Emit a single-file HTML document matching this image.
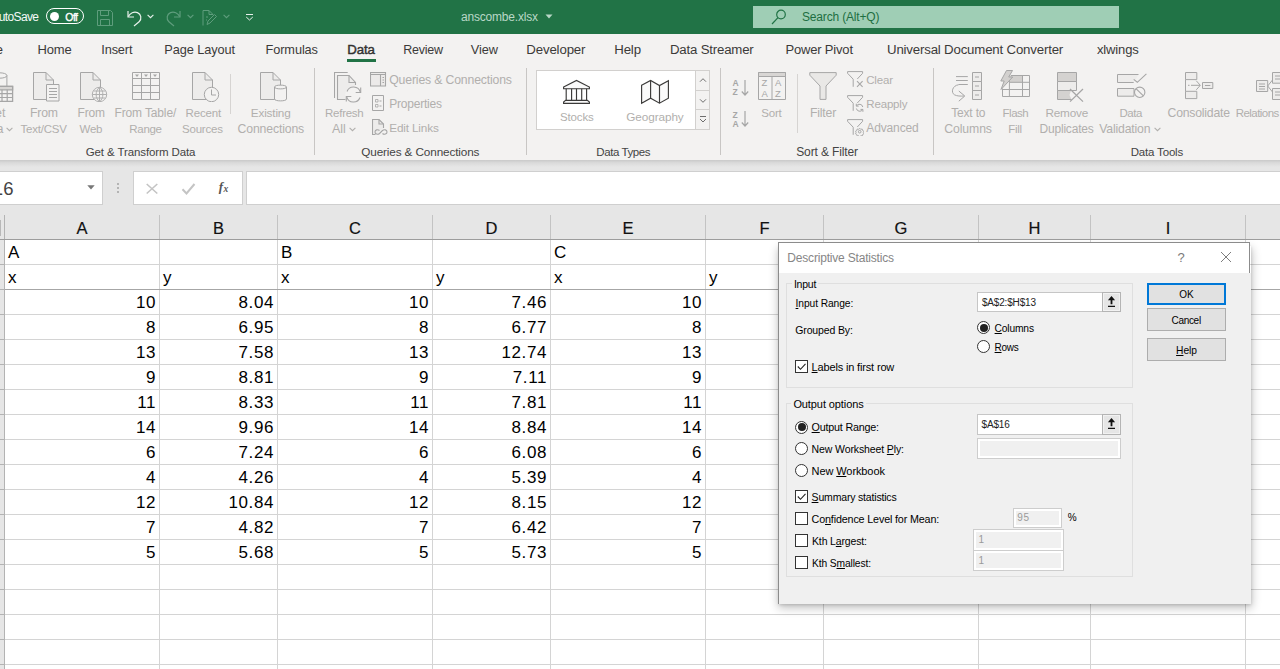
<!DOCTYPE html>
<html><head><meta charset="utf-8"><title>Excel</title>
<style>
html,body{margin:0;padding:0;}
html{overflow:hidden;width:1280px;height:669px;}
body{width:1280px;height:669px;overflow:hidden;position:relative;background:#fff;font-family:"Liberation Sans",sans-serif;}
.t{position:absolute;white-space:nowrap;margin:0;padding:0;}
.b{position:absolute;box-sizing:border-box;display:block;}
u{text-decoration:underline;text-underline-offset:1px;}
</style></head><body>
<div class="b" style="left:0px;top:0px;width:1280px;height:34px;background:#217346;"></div>
<div class="t" style="left:-1.20px;top:8.00px;font-size:12.0px;line-height:18px;color:#f4f9f6;letter-spacing:-0.655px;">utoSave</div>
<div class="b" style="left:46px;top:8px;width:38px;height:16px;border:1px solid #fff;border-radius:9px;"></div>
<div class="b" style="left:50px;top:12px;width:8.500px;height:8.500px;border-radius:5px;background:#fff;"></div>
<div class="t" style="left:65.30px;top:9.00px;font-size:10.5px;line-height:16px;color:#fff;letter-spacing:-0.569px;-webkit-text-stroke:0.35px #fff;">Off</div>
<svg class="b" style="left:96px;top:9px" width="18" height="18" viewBox="0 0 18 18" fill="none" stroke="#5f9d7d" stroke-width="1"><path d="M1.5 1.5h13l2 2v13h-15z"/><path d="M4.5 1.5v5h8v-5"/><path d="M4.5 16.5v-6h9v6"/></svg>
<svg class="b" style="left:126px;top:9px" width="17" height="18" viewBox="0 0 17 18" fill="none" stroke="#e8f1ec" stroke-width="1.2"><path d="M2 2v6h6"/><path d="M2.3 7.6C4 4 8 2.2 11.5 3.6c3.6 1.5 4.6 6 1.6 9.200L8 17"/></svg>
<svg class="b" style="left:147px;top:14px" width="7" height="5" viewBox="0 0 7 5" fill="none" stroke="#e8f1ec" stroke-width="1.1"><path d="M.6.8l2.900 2.900L6.400.8"/></svg>
<svg class="b" style="left:165px;top:9px" width="17" height="18" viewBox="0 0 17 18" fill="none" stroke="#5f9d7d" stroke-width="1.2"><path d="M15 2v6H9"/><path d="M14.700 7.600C13 4 9 2.200 5.500 3.600 1.900 5.100.9 9.600 3.900 12.800L9 17"/></svg>
<svg class="b" style="left:187px;top:14px" width="7" height="5" viewBox="0 0 7 5" fill="none" stroke="#5f9d7d" stroke-width="1.1"><path d="M.6.8l2.900 2.900L6.400.8"/></svg>
<svg class="b" style="left:202px;top:9px" width="16" height="18" viewBox="0 0 16 18" fill="none" stroke="#5f9d7d" stroke-width="1"><path d="M1 16.500V1.500h6l4 4"/><path d="M7 1.500v4h4"/><path d="M5 15.500l1-3.500 6.500-6.500 2 2L8 14z"/><path d="M4 8h2M4 11h1"/></svg>
<svg class="b" style="left:223px;top:14px" width="7" height="5" viewBox="0 0 7 5" fill="none" stroke="#5f9d7d" stroke-width="1.1"><path d="M.6.8l2.900 2.900L6.400.8"/></svg>
<svg class="b" style="left:245px;top:12px" width="9" height="9" viewBox="0 0 9 9" fill="none" stroke="#e8f1ec" stroke-width="1"><path d="M1 2.500h7"/><path d="M1.200 5l3.300 3 3.300-3"/></svg>
<div class="t" style="left:461.00px;top:8.00px;font-size:12.0px;line-height:18px;color:#b9d8c7;letter-spacing:-0.197px;">anscombe.xlsx</div>
<svg class="b" style="left:545px;top:14px" width="8" height="5" viewBox="0 0 8 5"><path d="M.5.5h7L4 4.500z" fill="#b9d8c7"/></svg>
<div class="b" style="left:753px;top:6px;width:366px;height:22px;background:#9fceb5;"></div>
<svg class="b" style="left:771px;top:9px" width="16" height="16" viewBox="0 0 16 16" fill="none" stroke="#217346" stroke-width="1.2"><circle cx="10" cy="5.500" r="4.300"/><path d="M7 8.700L1 15"/></svg>
<div class="t" style="left:802.00px;top:8.00px;font-size:12.0px;line-height:18px;color:#1e6e42;letter-spacing:-0.169px;">Search (Alt+Q)</div>
<div class="b" style="left:0px;top:34px;width:1280px;height:126px;background:#f3f2f1;"></div>
<div class="t" style="left:-18.75px;top:40.00px;font-size:13.5px;line-height:19px;color:#3b3a39;">File</div>
<div class="t" style="left:37.50px;top:40.00px;font-size:13.0px;line-height:19px;color:#3b3a39;letter-spacing:-0.145px;">Home</div>
<div class="t" style="left:101.25px;top:40.00px;font-size:12.75px;line-height:19px;color:#3b3a39;letter-spacing:-0.128px;">Insert</div>
<div class="t" style="left:164.25px;top:40.00px;font-size:12.75px;line-height:19px;color:#3b3a39;letter-spacing:-0.085px;">Page Layout</div>
<div class="t" style="left:265.50px;top:40.00px;font-size:12.75px;line-height:19px;color:#3b3a39;letter-spacing:-0.092px;">Formulas</div>
<div class="t" style="left:403.25px;top:41.00px;font-size:12.5px;line-height:18px;color:#3b3a39;letter-spacing:-0.255px;">Review</div>
<div class="t" style="left:470.75px;top:40.00px;font-size:12.75px;line-height:19px;color:#3b3a39;letter-spacing:-0.063px;">View</div>
<div class="t" style="left:526.25px;top:40.00px;font-size:13.25px;line-height:19px;color:#3b3a39;letter-spacing:-0.143px;">Developer</div>
<div class="t" style="left:614.25px;top:40.00px;font-size:13.25px;line-height:19px;color:#3b3a39;letter-spacing:-0.168px;">Help</div>
<div class="t" style="left:670.00px;top:40.00px;font-size:13.25px;line-height:19px;color:#3b3a39;letter-spacing:-0.200px;">Data Streamer</div>
<div class="t" style="left:785.50px;top:40.00px;font-size:13.0px;line-height:19px;color:#3b3a39;letter-spacing:-0.185px;">Power Pivot</div>
<div class="t" style="left:887.00px;top:40.00px;font-size:13.25px;line-height:19px;color:#3b3a39;letter-spacing:-0.182px;">Universal Document Converter</div>
<div class="t" style="left:1097.00px;top:40.00px;font-size:13.0px;line-height:19px;color:#3b3a39;letter-spacing:-0.146px;">xlwings</div>
<div class="t" style="left:347.30px;top:40.00px;font-size:13.25px;line-height:19px;color:#323130;letter-spacing:-0.099px;-webkit-text-stroke:0.45px #323130;">Data</div>
<div class="b" style="left:347px;top:59px;width:29px;height:3px;background:#217346;"></div>
<div class="b" style="left:314px;top:68px;width:1px;height:87px;background:#c8c6c4;"></div>
<div class="b" style="left:526px;top:68px;width:1px;height:87px;background:#c8c6c4;"></div>
<div class="b" style="left:720px;top:68px;width:1px;height:87px;background:#c8c6c4;"></div>
<div class="b" style="left:933px;top:68px;width:1px;height:87px;background:#c8c6c4;"></div>
<div class="b" style="left:230px;top:74px;width:1px;height:40px;background:#d6d4d2;"></div>
<div class="b" style="left:797px;top:74px;width:1px;height:59px;background:#d6d4d2;"></div>
<div class="t" style="left:85.75px;top:144.00px;font-size:11.5px;line-height:16px;color:#444;letter-spacing:-0.110px;">Get &amp; Transform Data</div>
<div class="t" style="left:361.25px;top:143.00px;font-size:11.75px;line-height:17px;color:#444;letter-spacing:-0.129px;">Queries &amp; Connections</div>
<div class="t" style="left:596.25px;top:144.00px;font-size:11.5px;line-height:16px;color:#444;letter-spacing:-0.412px;">Data Types</div>
<div class="t" style="left:796.25px;top:143.00px;font-size:12.0px;line-height:18px;color:#444;letter-spacing:-0.133px;">Sort &amp; Filter</div>
<div class="t" style="left:1130.75px;top:144.00px;font-size:11.5px;line-height:16px;color:#444;letter-spacing:-0.181px;">Data Tools</div>
<div class="t" style="left:-14.65px;top:104.00px;font-size:12.5px;line-height:18px;color:#b1afad;">Get</div>
<div class="t" style="left:-22.91px;top:120.00px;font-size:12.5px;line-height:18px;color:#b1afad;">Data</div>
<div class="t" style="left:30.00px;top:104.00px;font-size:12.25px;line-height:18px;color:#b1afad;letter-spacing:-0.193px;">From</div>
<div class="t" style="left:20.50px;top:121.00px;font-size:11.5px;line-height:16px;color:#b1afad;letter-spacing:-0.205px;">Text/CSV</div>
<div class="t" style="left:77.50px;top:104.00px;font-size:12.0px;line-height:18px;color:#b1afad;letter-spacing:-0.165px;">From</div>
<div class="t" style="left:79.50px;top:121.00px;font-size:11.5px;line-height:16px;color:#b1afad;letter-spacing:-0.219px;">Web</div>
<div class="t" style="left:114.50px;top:104.00px;font-size:12.0px;line-height:18px;color:#b1afad;letter-spacing:-0.138px;">From Table/</div>
<div class="t" style="left:129.25px;top:121.00px;font-size:11.5px;line-height:16px;color:#b1afad;letter-spacing:-0.285px;">Range</div>
<div class="t" style="left:185.50px;top:105.00px;font-size:11.5px;line-height:16px;color:#b1afad;letter-spacing:-0.136px;">Recent</div>
<div class="t" style="left:182.00px;top:121.00px;font-size:11.5px;line-height:16px;color:#b1afad;letter-spacing:-0.197px;">Sources</div>
<div class="t" style="left:250.75px;top:104.00px;font-size:11.75px;line-height:17px;color:#b1afad;letter-spacing:-0.162px;">Existing</div>
<div class="t" style="left:237.50px;top:120.00px;font-size:12.25px;line-height:18px;color:#b1afad;letter-spacing:-0.135px;">Connections</div>
<div class="t" style="left:325.00px;top:105.00px;font-size:11.5px;line-height:16px;color:#b1afad;letter-spacing:-0.252px;">Refresh</div>
<div class="t" style="left:332.00px;top:120.00px;font-size:12.5px;line-height:18px;color:#b1afad;letter-spacing:-0.069px;">All</div>
<div class="t" style="left:389.25px;top:71.00px;font-size:12.25px;line-height:18px;color:#b1afad;letter-spacing:-0.161px;">Queries &amp; Connections</div>
<div class="t" style="left:389.25px;top:95.00px;font-size:12.0px;line-height:18px;color:#b1afad;letter-spacing:-0.216px;">Properties</div>
<div class="t" style="left:389.25px;top:119.00px;font-size:11.75px;line-height:17px;color:#b1afad;letter-spacing:-0.160px;">Edit Links</div>
<div class="t" style="left:761.25px;top:105.00px;font-size:11.5px;line-height:16px;color:#b1afad;letter-spacing:-0.197px;">Sort</div>
<div class="t" style="left:810.00px;top:104.00px;font-size:12.25px;line-height:18px;color:#b1afad;letter-spacing:-0.194px;">Filter</div>
<div class="t" style="left:866.25px;top:72.00px;font-size:11.5px;line-height:16px;color:#b1afad;letter-spacing:-0.184px;">Clear</div>
<div class="t" style="left:866.25px;top:96.00px;font-size:11.5px;line-height:16px;color:#b1afad;letter-spacing:-0.157px;">Reapply</div>
<div class="t" style="left:866.25px;top:119.00px;font-size:12.0px;line-height:18px;color:#b1afad;letter-spacing:-0.125px;">Advanced</div>
<div class="t" style="left:951.25px;top:104.00px;font-size:12.0px;line-height:18px;color:#b1afad;letter-spacing:-0.184px;">Text to</div>
<div class="t" style="left:944.25px;top:120.00px;font-size:12.25px;line-height:18px;color:#b1afad;letter-spacing:-0.098px;">Columns</div>
<div class="t" style="left:1002.50px;top:105.00px;font-size:11.5px;line-height:16px;color:#b1afad;letter-spacing:-0.467px;">Flash</div>
<div class="t" style="left:1008.25px;top:121.00px;font-size:11.5px;line-height:16px;color:#b1afad;letter-spacing:-0.312px;">Fill</div>
<div class="t" style="left:1045.50px;top:104.00px;font-size:11.75px;line-height:17px;color:#b1afad;letter-spacing:-0.201px;">Remove</div>
<div class="t" style="left:1039.50px;top:120.00px;font-size:12.0px;line-height:18px;color:#b1afad;letter-spacing:-0.198px;">Duplicates</div>
<div class="t" style="left:1119.50px;top:105.00px;font-size:11.5px;line-height:16px;color:#b1afad;letter-spacing:-0.433px;">Data</div>
<div class="t" style="left:1099.25px;top:120.00px;font-size:12.25px;line-height:18px;color:#b1afad;letter-spacing:-0.183px;">Validation</div>
<div class="t" style="left:1167.50px;top:104.00px;font-size:12.25px;line-height:18px;color:#b1afad;letter-spacing:-0.219px;">Consolidate</div>
<div class="t" style="left:1235.75px;top:105.00px;font-size:11.5px;line-height:16px;color:#b1afad;letter-spacing:-0.549px;">Relations</div>
<svg class="b" style="left:6px;top:127px" width="7" height="5" viewBox="0 0 7 5" fill="none" stroke="#b1afad" stroke-width="1.1"><path d="M.6.8l2.900 2.900L6.400.8"/></svg>
<svg class="b" style="left:349px;top:127px" width="7" height="5" viewBox="0 0 7 5" fill="none" stroke="#b1afad" stroke-width="1.1"><path d="M.6.8l2.900 2.900L6.400.8"/></svg>
<svg class="b" style="left:1154px;top:127px" width="7" height="5" viewBox="0 0 7 5" fill="none" stroke="#b1afad" stroke-width="1.1"><path d="M.6.8l2.900 2.900L6.400.8"/></svg>
<svg class="b" style="left:0px;top:71px" width="16" height="32" viewBox="0 0 16 32" fill="none" stroke="#a6a6a6" stroke-width="1" ><path d="M-8 4.500c0-3.600 14.900-3.600 14.900 0v11"/><path d="M-8 4.500c0 3.600 14.900 3.600 14.900 0"/><path d="M-3 15.400h15.600v15H-3z" fill="#f3f2f1" stroke-width="1.300"/><path d="M-3 15.400h15.600v3.400H-3z" fill="#d8d6d4" stroke-width="1.300"/><path d="M-3 22.600h15.600M-3 26.500h15.600M2 18.800v11.600M7.200 18.800v11.600" stroke-width="1.200"/></svg>
<svg class="b" style="left:33px;top:72px" width="28" height="30" viewBox="0 0 28 30" fill="none" stroke="#a6a6a6" stroke-width="1" ><path d="M.5.5h12.500l7.500 7.500v19.500h-20z" fill="#edeceb"/><path d="M13 .5v7.500h7.500"/><path d="M13.500 12.500h12.500v16.500h-12.500z" fill="#f3f2f1"/><path d="M16 16.500h8M16 19.500h8M16 22.500h8M16 25.500h8"/></svg>
<svg class="b" style="left:80px;top:72px" width="28" height="30" viewBox="0 0 28 30" fill="none" stroke="#a6a6a6" stroke-width="1" ><path d="M.5.5h12.500l7.500 7.500v19.500h-20z" fill="#edeceb"/><path d="M13 .5v7.500h7.500"/><circle cx="19.500" cy="22.500" r="7.200" fill="#f3f2f1" stroke="#b0b0b0"/><path d="M12.300 22.500h14.400M19.500 15.300v14.400M19.500 15.300c-4.500 3.500-4.500 10.900 0 14.400M19.500 15.300c4.500 3.500 4.500 10.900 0 14.400M13.500 19h12M13.500 26h12" stroke="#b0b0b0"/></svg>
<svg class="b" style="left:132px;top:72px" width="28" height="28" viewBox="0 0 28 28" fill="none" stroke="#a6a6a6" stroke-width="1" ><path d="M.5.500h27v27h-27z"/><path d="M.5 6.500h27M.5 13.500h27M.5 20.500h27M9.500.5v27M18.500.5v27"/><path d="M3 2.500h4l-2 2.500zM12 2.500h4l-2 2.500zM21 2.500h4l-2 2.500z" fill="#a6a6a6" stroke="none"/></svg>
<svg class="b" style="left:192px;top:72px" width="28" height="30" viewBox="0 0 28 30" fill="none" stroke="#a6a6a6" stroke-width="1" ><path d="M.5.5h12.500l7.500 7.500v19.500h-20z" fill="#edeceb"/><path d="M13 .5v7.500h7.500"/><circle cx="19.500" cy="22.500" r="7.200" fill="#f3f2f1"/><path d="M19.500 17.500v5.500h4.500"/></svg>
<svg class="b" style="left:260px;top:72px" width="28" height="30" viewBox="0 0 28 30" fill="none" stroke="#a6a6a6" stroke-width="1" ><path d="M.5.5h12.500l7.500 7.500v19.500h-20z" fill="#edeceb"/><path d="M13 .5v7.500h7.500"/><path d="M14.500 15v12c0 2.500 12 2.500 12 0V15c0-2.500-12-2.500-12 0z" fill="#f3f2f1"/><path d="M14.500 15c0 2.500 12 2.500 12 0"/></svg>
<svg class="b" style="left:334px;top:71px" width="30" height="32" viewBox="0 0 30 32" fill="none" stroke="#a6a6a6" stroke-width="1.1" ><path d="M13.700 1.500H.5v25.500"/><path d="M11.500 28.500H3.500v-24h11.500l6.500 7v2.500" fill="#edeceb"/><path d="M15 4.500v7h6.500"/><circle cx="19.500" cy="23.500" r="8.300" fill="#f3f2f1" stroke="none"/><path d="M26.300 21.200a7 7 0 0 0-13.300-.7"/><path d="M26.700 16.500v5h-5"/><path d="M12.700 25.800a7 7 0 0 0 13.300.7"/><path d="M12.300 30.500v-5h5"/></svg>
<svg class="b" style="left:370px;top:72px" width="17" height="15" viewBox="0 0 17 15" fill="none" stroke="#a6a6a6" stroke-width="1.1" ><path d="M.5.500h15v13.500H.5z" fill="#eceae9"/><path d="M.5 2.500h15M10.500 2.500v11.500"/><path d="M12.500 5.500h1.500M12.500 8h1.500M12.500 10.500h1.500"/></svg>
<svg class="b" style="left:372px;top:95px" width="13" height="16" viewBox="0 0 13 16" fill="none" stroke="#a6a6a6" stroke-width="1" ><path d="M.5.5h11v15h-11z"/><path d="M3.500 4.500h2.500v2.500h-2.500zM3.500 9.500h2.500v2.500h-2.500z" stroke-width=".8"/><path d="M7.500 6h2M7.500 11h2"/></svg>
<svg class="b" style="left:372px;top:119px" width="16" height="17" viewBox="0 0 16 17" fill="none" stroke="#a6a6a6" stroke-width="1.1" ><path d="M3.500 15.500H.5V.5h6.500l4.500 4.500v4" fill="#edeceb"/><path d="M7 .5v4.500h4.500"/><path d="M7.500 11.500c-1.800-1.600-4.500-.6-4.500 1.500s2.800 3 4.500 1.500l3-3c1.800-1.600 4.500-.6 4.500 1.500s-2.800 3-4.500 1.500"/></svg>
<div class="b" style="left:536px;top:70px;width:174px;height:60px;background:#fff;border:1px solid #d2d0ce;"></div>
<div class="b" style="left:695px;top:70px;width:15px;height:21px;background:#f3f2f1;border:1px solid #d2d0ce;"></div>
<div class="b" style="left:695px;top:91px;width:15px;height:19px;background:#f3f2f1;border:1px solid #d2d0ce;border-top:none;"></div>
<div class="b" style="left:695px;top:110px;width:15px;height:20px;background:#f3f2f1;border:1px solid #d2d0ce;border-top:none;"></div>
<svg class="b" style="left:699px;top:77px" width="8" height="6" viewBox="0 0 8 6" fill="none" stroke="#6e6e6e" stroke-width="1" ><path d="M1 4.700l3-3 3 3"/></svg>
<svg class="b" style="left:699px;top:98px" width="8" height="6" viewBox="0 0 8 6" fill="none" stroke="#6e6e6e" stroke-width="1" ><path d="M1 1.300l3 3 3-3"/></svg>
<svg class="b" style="left:699px;top:114px" width="8" height="10" viewBox="0 0 8 10" fill="none" stroke="#6e6e6e" stroke-width="1" ><path d="M1 2.500h6"/><path d="M1 5l3 3 3-3"/></svg>
<svg class="b" style="left:563px;top:79px" width="28" height="26" viewBox="0 0 28 26" fill="none" stroke="#3b3a39" stroke-width="1.15" ><path d="M.6 8L13.500 1.400 26.400 8v1.700H.6z" fill="#fafafa"/><path d="M3.200 9.700v11.600M8.600 9.700v11.600M13.500 9.700v11.600M18.700 9.700v11.600M23.600 9.700v11.600"/><path d="M2.600 21.300h21.800l2 1.700v1.400H.6V23z" fill="#fafafa"/></svg>
<svg class="b" style="left:641px;top:79px" width="29" height="26" viewBox="0 0 29 26" fill="none" stroke="#3b3a39" stroke-width="1.15" ><path d="M.6 6.200L9.600 1.400l8.900 5.200 8.900-4.900v17.500l-8.900 5-8.900-5-9 5z" fill="#fafafa"/><path d="M9.600 1.400v17.800M18.500 6.600v17.600"/></svg>
<div class="t" style="left:732.50px;top:76.00px;font-size:8.5px;line-height:14px;color:#a6a6a6;font-weight:bold;">A</div>
<div class="t" style="left:732.50px;top:85.00px;font-size:8.5px;line-height:14px;color:#a6a6a6;font-weight:bold;">Z</div>
<svg class="b" style="left:741px;top:79.5px" width="8" height="16" viewBox="0 0 8 16" fill="none" stroke="#a6a6a6" stroke-width="1.2" ><path d="M4 0v15M.8 11.500l3.200 3.500 3.200-3.500"/></svg>
<div class="t" style="left:732.50px;top:108.00px;font-size:8.5px;line-height:14px;color:#a6a6a6;font-weight:bold;">Z</div>
<div class="t" style="left:732.50px;top:117.00px;font-size:8.5px;line-height:14px;color:#a6a6a6;font-weight:bold;">A</div>
<svg class="b" style="left:741px;top:111.3px" width="8" height="16" viewBox="0 0 8 16" fill="none" stroke="#a6a6a6" stroke-width="1.2" ><path d="M4 0v15M.8 11.500l3.200 3.500 3.200-3.500"/></svg>
<svg class="b" style="left:758px;top:72px" width="28" height="28" viewBox="0 0 28 28" fill="none" stroke="#a6a6a6" stroke-width="1" ><path d="M.5.5h27v27h-27z"/><path d="M.5 4.500h27M14 4.500v23"/><path d="M.5.5h27v4h-27z" fill="#d8d6d4"/></svg>
<div class="t" style="left:761.60px;top:75.00px;font-size:9.5px;line-height:15px;color:#a6a6a6;">Z</div>
<div class="t" style="left:761.60px;top:86.00px;font-size:9.5px;line-height:15px;color:#a6a6a6;">A</div>
<div class="t" style="left:775.10px;top:75.00px;font-size:9.5px;line-height:15px;color:#a6a6a6;">A</div>
<div class="t" style="left:775.10px;top:86.00px;font-size:9.5px;line-height:15px;color:#a6a6a6;">Z</div>
<svg class="b" style="left:809px;top:72px" width="28" height="28" viewBox="0 0 28 28" fill="none" stroke="#a6a6a6" stroke-width="1" ><path d="M.8.600h26.400v2.600L17 14v13.400h-6V14L.8 3.200z" fill="#e9e8e6"/></svg>
<svg class="b" style="left:847px;top:71px" width="17" height="17" viewBox="0 0 17 17" fill="none" stroke="#a6a6a6" stroke-width="1" ><path d="M6.200 15.800V8.200L.6 2.300V.6h15v1.700L10.300 8"/><path d="M10 10.200l5.600 5.600M15.600 10.200L10 15.800" stroke-width="1.1"/></svg>
<svg class="b" style="left:847px;top:95px" width="17" height="17" viewBox="0 0 17 17" fill="none" stroke="#a6a6a6" stroke-width="1" ><path d="M6.200 15.800V8.200L.6 2.300V.6h15v1.700L10.300 8"/><path d="M15.800 12a3.400 3.400 0 0 0-6.200-1.200M9.300 8.700v2.400h2.400M9.400 13.500a3.400 3.400 0 0 0 6.200 1.200M15.900 16.800v-2.400h-2.400" /></svg>
<svg class="b" style="left:847px;top:119px" width="17" height="17" viewBox="0 0 17 17" fill="none" stroke="#a6a6a6" stroke-width="1" ><path d="M6.200 15.800V8.200L.6 2.300V.6h15v1.700L10.300 8"/><circle cx="12.700" cy="12.700" r="1.300"/><path d="M12.700 9.200l1 1.100 1.500-.3.400 1.500 1.300.7-.6 1.300.6 1.300-1.300.7-.4 1.500-1.500-.3-1 1.100-1-1.100-1.500.3-.4-1.500-1.300-.7.600-1.300-.6-1.300 1.300-.7.400-1.500 1.500.3z" stroke-width=".9"/></svg>
<svg class="b" style="left:951px;top:72px" width="32" height="31" viewBox="0 0 32 31" fill="none" stroke="#a6a6a6" stroke-width="1" ><path d="M5 4.600h11.800M5 8.500h11.800M7.500 12.500h9.300"/><path d="M7.500 12.800C1.500 13.500-.5 20.500 3.500 22.800c2.500 1.400 6 1.400 9.500 1.200"/><path d="M7.800 19l6 5-6 5.200"/><path d="M21.500.5h9v9h-9zM21.500 9.500h9v9h-9zM21.500 18.500h9v9h-9z" fill="#edeceb"/><path d="M24 5h4M24 14h4M24 23h4"/></svg>
<svg class="b" style="left:1000px;top:70px" width="31" height="28" viewBox="0 0 31 28" fill="none" stroke="#a6a6a6" stroke-width="1" ><path d="M9.400 5.500h13.100v6.800H9.400z" fill="#d2d0ce" stroke="none"/><path d="M11 5.500h18.500v21H2.500v-8"/><path d="M9.400 12.300h20.100M2.500 19.500h27M9.400 9v17.500M22.500 5.500v21"/><path d="M6.500.5h6l-3.800 6.500h4L1 19.500l3.200-8.500H.8z" fill="#d2d0ce"/></svg>
<svg class="b" style="left:1057px;top:72px" width="28" height="31" viewBox="0 0 28 31" fill="none" stroke="#a6a6a6" stroke-width="1" ><path d="M.5.500h19v9H.5z" fill="#d4d2d0"/><path d="M.5 9.500h19v9H.5z" fill="#edeceb"/><path d="M.5 18.500h13.500l-1.500 4.500 2 4.500H.5z" fill="#d4d2d0" stroke="none"/><path d="M14.500 18.500H.5v9h14"/><path d="M19.500 9.500v7.500"/><path d="M13 17l13 12.600M26 17L13 29.600" stroke-width="1.300"/></svg>
<svg class="b" style="left:1117px;top:73px" width="31" height="26" viewBox="0 0 31 26" fill="none" stroke="#a6a6a6" stroke-width="1" ><path d="M21.500 1.500H.5v8h16.200" fill="#edeceb"/><path d="M16.700 6.400l3.600 2.900L29.400.8" stroke-width="1.100"/><path d="M.5 15.500h16.500v7.700H.5z" fill="#edeceb"/><circle cx="22.700" cy="19.300" r="5.200" fill="#f3f2f1" stroke-width="1.100"/><path d="M19 15.700l7.400 7.200" stroke-width="1.100"/></svg>
<svg class="b" style="left:1185px;top:72px" width="29" height="28" viewBox="0 0 29 28" fill="none" stroke="#a6a6a6" stroke-width="1" ><path d="M.5.500h11.300v7.100H.5z" fill="#edeceb"/><path d="M.5 19.300h11.300v7.300H.5z" fill="#edeceb"/><path d="M.5 7.600v11.700"/><path d="M3 13.300h1.500M6 13.300h9"/><path d="M11.300 8.800l4 4.500-4 4.500"/><path d="M17.500 10.500h10.300v6H17.500z" fill="#edeceb"/><path d="M20 13.500h5.300"/></svg>
<svg class="b" style="left:1256px;top:72px" width="24" height="28" viewBox="0 0 24 28" fill="none" stroke="#a6a6a6" stroke-width="1" ><path d="M.5 8.500h11.200v11H.5z" fill="#edeceb"/><path d="M3 12h6M3 14.500h6M3 17h6"/><path d="M11.700 14l4.800-6M11.700 14l4.800 6"/><path d="M16.500.5h9v10.700h-9zM16.500 16.500h9v11h-9z" fill="#edeceb"/><path d="M19 4h6M19 7h6M19 20h6M19 23h6"/></svg>
<div class="t" style="left:560.00px;top:109.00px;font-size:11.5px;line-height:16px;color:#b1afad;letter-spacing:-0.152px;">Stocks</div>
<div class="t" style="left:626.25px;top:108.00px;font-size:11.75px;line-height:17px;color:#b1afad;letter-spacing:-0.080px;">Geography</div>
<div class="b" style="left:0px;top:160px;width:1280px;height:80px;background:#e6e6e6;"></div>
<div class="b" style="left:0px;top:160px;width:1280px;height:7px;background:linear-gradient(#c9c9c9,#dadada 40%,#e6e6e6);"></div>
<div class="b" style="left:-2px;top:171px;width:105px;height:34px;background:#fff;border:1px solid #cfcfcf;"></div>
<div class="t" style="left:-19.51px;top:176.00px;font-size:18.5px;line-height:25px;color:#444;">A16</div>
<svg class="b" style="left:87px;top:185px" width="8" height="5" viewBox="0 0 8 5"><path d="M.3.300h7.400L4 4.600z" fill="#777"/></svg>
<div class="b" style="left:117px;top:183px;width:2px;height:2px;background:#b4b4b4;"></div>
<div class="b" style="left:117px;top:187px;width:2px;height:2px;background:#b4b4b4;"></div>
<div class="b" style="left:117px;top:191px;width:2px;height:2px;background:#b4b4b4;"></div>
<div class="b" style="left:133px;top:171px;width:110px;height:34px;background:#fff;border:1px solid #cfcfcf;"></div>
<svg class="b" style="left:145px;top:183px" width="14" height="12" viewBox="0 0 14 12" fill="none" stroke="#c4c4c4" stroke-width="1.6"><path d="M1.700 1l10.600 9.500M12.300 1L1.700 10.500"/></svg>
<svg class="b" style="left:181px;top:183px" width="15" height="12" viewBox="0 0 15 12" fill="none" stroke="#c4c4c4" stroke-width="2"><path d="M1.500 6.200l4 4.200L13.500 1"/></svg>
<div class="t" style="left:218.8px;top:177px;font-family:'Liberation Serif',serif;font-style:italic;font-weight:bold;font-size:13px;line-height:19px;color:#555;">f</div>
<div class="t" style="left:223.6px;top:182px;font-family:'Liberation Serif',serif;font-style:italic;font-weight:bold;font-size:9.5px;line-height:14px;color:#555;">x</div>
<div class="b" style="left:246px;top:171px;width:1044px;height:34px;background:#fff;border:1px solid #cfcfcf;"></div>
<div class="b" style="left:0px;top:240px;width:1280px;height:429px;background:#fff;"></div>
<div class="b" style="left:0px;top:215px;width:4px;height:454px;background:#e6e6e6;"></div>
<div class="b" style="left:4px;top:215px;width:1px;height:454px;background:#b3b3b3;"></div>
<div class="b" style="left:159px;top:215px;width:1px;height:24px;background:#c3c3c3;"></div>
<div class="b" style="left:159px;top:240px;width:1px;height:429px;background:#d4d4d4;"></div>
<div class="b" style="left:277px;top:215px;width:1px;height:24px;background:#c3c3c3;"></div>
<div class="b" style="left:277px;top:240px;width:1px;height:429px;background:#d4d4d4;"></div>
<div class="b" style="left:432px;top:215px;width:1px;height:24px;background:#c3c3c3;"></div>
<div class="b" style="left:432px;top:240px;width:1px;height:429px;background:#d4d4d4;"></div>
<div class="b" style="left:550px;top:215px;width:1px;height:24px;background:#c3c3c3;"></div>
<div class="b" style="left:550px;top:240px;width:1px;height:429px;background:#d4d4d4;"></div>
<div class="b" style="left:705px;top:215px;width:1px;height:24px;background:#c3c3c3;"></div>
<div class="b" style="left:705px;top:240px;width:1px;height:429px;background:#d4d4d4;"></div>
<div class="b" style="left:823px;top:215px;width:1px;height:24px;background:#c3c3c3;"></div>
<div class="b" style="left:823px;top:240px;width:1px;height:429px;background:#d4d4d4;"></div>
<div class="b" style="left:978px;top:215px;width:1px;height:24px;background:#c3c3c3;"></div>
<div class="b" style="left:978px;top:240px;width:1px;height:429px;background:#d4d4d4;"></div>
<div class="b" style="left:1090px;top:215px;width:1px;height:24px;background:#c3c3c3;"></div>
<div class="b" style="left:1090px;top:240px;width:1px;height:429px;background:#d4d4d4;"></div>
<div class="b" style="left:1245px;top:215px;width:1px;height:24px;background:#c3c3c3;"></div>
<div class="b" style="left:1245px;top:240px;width:1px;height:429px;background:#d4d4d4;"></div>
<div class="b" style="left:1400px;top:215px;width:1px;height:24px;background:#c3c3c3;"></div>
<div class="b" style="left:1400px;top:240px;width:1px;height:429px;background:#d4d4d4;"></div>
<div class="t" style="left:76.50px;top:217.00px;font-size:16.5px;line-height:22px;color:#111;-webkit-text-stroke:0.2px #111;">A</div>
<div class="t" style="left:213.00px;top:217.00px;font-size:16.5px;line-height:22px;color:#111;-webkit-text-stroke:0.2px #111;">B</div>
<div class="t" style="left:349.04px;top:217.00px;font-size:16.5px;line-height:22px;color:#111;-webkit-text-stroke:0.2px #111;">C</div>
<div class="t" style="left:485.54px;top:217.00px;font-size:16.5px;line-height:22px;color:#111;-webkit-text-stroke:0.2px #111;">D</div>
<div class="t" style="left:622.50px;top:217.00px;font-size:16.5px;line-height:22px;color:#111;-webkit-text-stroke:0.2px #111;">E</div>
<div class="t" style="left:759.46px;top:217.00px;font-size:16.5px;line-height:22px;color:#111;-webkit-text-stroke:0.2px #111;">F</div>
<div class="t" style="left:894.58px;top:217.00px;font-size:16.5px;line-height:22px;color:#111;-webkit-text-stroke:0.2px #111;">G</div>
<div class="t" style="left:1028.54px;top:217.00px;font-size:16.5px;line-height:22px;color:#111;-webkit-text-stroke:0.2px #111;">H</div>
<div class="t" style="left:1165.71px;top:217.00px;font-size:16.5px;line-height:22px;color:#111;-webkit-text-stroke:0.2px #111;">I</div>
<div class="b" style="left:0px;top:220px;width:1px;height:16px;background:#b8b8b8;"></div>
<div class="b" style="left:0px;top:239px;width:1280px;height:1px;background:#9d9d9d;"></div>
<div class="b" style="left:5px;top:264px;width:1275px;height:1px;background:#d4d4d4;"></div>
<div class="b" style="left:0px;top:264px;width:4px;height:1px;background:#b3b3b3;"></div>
<div class="b" style="left:5px;top:289px;width:1275px;height:1px;background:#a6a6a6;"></div>
<div class="b" style="left:0px;top:289px;width:4px;height:1px;background:#b3b3b3;"></div>
<div class="b" style="left:5px;top:314px;width:1275px;height:1px;background:#d4d4d4;"></div>
<div class="b" style="left:0px;top:314px;width:4px;height:1px;background:#b3b3b3;"></div>
<div class="b" style="left:5px;top:339px;width:1275px;height:1px;background:#d4d4d4;"></div>
<div class="b" style="left:0px;top:339px;width:4px;height:1px;background:#b3b3b3;"></div>
<div class="b" style="left:5px;top:364px;width:1275px;height:1px;background:#d4d4d4;"></div>
<div class="b" style="left:0px;top:364px;width:4px;height:1px;background:#b3b3b3;"></div>
<div class="b" style="left:5px;top:389px;width:1275px;height:1px;background:#d4d4d4;"></div>
<div class="b" style="left:0px;top:389px;width:4px;height:1px;background:#b3b3b3;"></div>
<div class="b" style="left:5px;top:414px;width:1275px;height:1px;background:#d4d4d4;"></div>
<div class="b" style="left:0px;top:414px;width:4px;height:1px;background:#b3b3b3;"></div>
<div class="b" style="left:5px;top:439px;width:1275px;height:1px;background:#d4d4d4;"></div>
<div class="b" style="left:0px;top:439px;width:4px;height:1px;background:#b3b3b3;"></div>
<div class="b" style="left:5px;top:464px;width:1275px;height:1px;background:#d4d4d4;"></div>
<div class="b" style="left:0px;top:464px;width:4px;height:1px;background:#b3b3b3;"></div>
<div class="b" style="left:5px;top:489px;width:1275px;height:1px;background:#d4d4d4;"></div>
<div class="b" style="left:0px;top:489px;width:4px;height:1px;background:#b3b3b3;"></div>
<div class="b" style="left:5px;top:514px;width:1275px;height:1px;background:#d4d4d4;"></div>
<div class="b" style="left:0px;top:514px;width:4px;height:1px;background:#b3b3b3;"></div>
<div class="b" style="left:5px;top:539px;width:1275px;height:1px;background:#d4d4d4;"></div>
<div class="b" style="left:0px;top:539px;width:4px;height:1px;background:#b3b3b3;"></div>
<div class="b" style="left:5px;top:564px;width:1275px;height:1px;background:#d4d4d4;"></div>
<div class="b" style="left:0px;top:564px;width:4px;height:1px;background:#b3b3b3;"></div>
<div class="b" style="left:5px;top:589px;width:1275px;height:1px;background:#d4d4d4;"></div>
<div class="b" style="left:0px;top:589px;width:4px;height:1px;background:#b3b3b3;"></div>
<div class="b" style="left:5px;top:614px;width:1275px;height:1px;background:#d4d4d4;"></div>
<div class="b" style="left:0px;top:614px;width:4px;height:1px;background:#b3b3b3;"></div>
<div class="b" style="left:5px;top:639px;width:1275px;height:1px;background:#d4d4d4;"></div>
<div class="b" style="left:0px;top:639px;width:4px;height:1px;background:#b3b3b3;"></div>
<div class="b" style="left:5px;top:664px;width:1275px;height:1px;background:#d4d4d4;"></div>
<div class="b" style="left:0px;top:664px;width:4px;height:1px;background:#b3b3b3;"></div>
<div class="t" style="left:8.00px;top:241.00px;font-size:17px;line-height:23px;color:#000;">A</div>
<div class="t" style="left:281.00px;top:241.00px;font-size:17px;line-height:23px;color:#000;">B</div>
<div class="t" style="left:554.00px;top:241.00px;font-size:17px;line-height:23px;color:#000;">C</div>
<div class="t" style="left:8.00px;top:266.00px;font-size:17px;line-height:23px;color:#000;">x</div>
<div class="t" style="left:163.00px;top:266.00px;font-size:17px;line-height:23px;color:#000;">y</div>
<div class="t" style="left:281.00px;top:266.00px;font-size:17px;line-height:23px;color:#000;">x</div>
<div class="t" style="left:436.00px;top:266.00px;font-size:17px;line-height:23px;color:#000;">y</div>
<div class="t" style="left:554.00px;top:266.00px;font-size:17px;line-height:23px;color:#000;">x</div>
<div class="t" style="left:709.00px;top:266.00px;font-size:17px;line-height:23px;color:#000;">y</div>
<div class="t" style="left:135.90px;top:291.00px;font-size:17px;line-height:23px;color:#000;letter-spacing:0.6px;">10</div>
<div class="t" style="left:238.52px;top:291.00px;font-size:17px;line-height:23px;color:#000;letter-spacing:0.6px;">8.04</div>
<div class="t" style="left:408.90px;top:291.00px;font-size:17px;line-height:23px;color:#000;letter-spacing:0.6px;">10</div>
<div class="t" style="left:511.52px;top:291.00px;font-size:17px;line-height:23px;color:#000;letter-spacing:0.6px;">7.46</div>
<div class="t" style="left:681.90px;top:291.00px;font-size:17px;line-height:23px;color:#000;letter-spacing:0.6px;">10</div>
<div class="t" style="left:145.95px;top:316.00px;font-size:17px;line-height:23px;color:#000;letter-spacing:0.6px;">8</div>
<div class="t" style="left:238.52px;top:316.00px;font-size:17px;line-height:23px;color:#000;letter-spacing:0.6px;">6.95</div>
<div class="t" style="left:418.95px;top:316.00px;font-size:17px;line-height:23px;color:#000;letter-spacing:0.6px;">8</div>
<div class="t" style="left:511.52px;top:316.00px;font-size:17px;line-height:23px;color:#000;letter-spacing:0.6px;">6.77</div>
<div class="t" style="left:691.95px;top:316.00px;font-size:17px;line-height:23px;color:#000;letter-spacing:0.6px;">8</div>
<div class="t" style="left:135.90px;top:341.00px;font-size:17px;line-height:23px;color:#000;letter-spacing:0.6px;">13</div>
<div class="t" style="left:238.52px;top:341.00px;font-size:17px;line-height:23px;color:#000;letter-spacing:0.6px;">7.58</div>
<div class="t" style="left:408.90px;top:341.00px;font-size:17px;line-height:23px;color:#000;letter-spacing:0.6px;">13</div>
<div class="t" style="left:501.47px;top:341.00px;font-size:17px;line-height:23px;color:#000;letter-spacing:0.6px;">12.74</div>
<div class="t" style="left:681.90px;top:341.00px;font-size:17px;line-height:23px;color:#000;letter-spacing:0.6px;">13</div>
<div class="t" style="left:145.95px;top:366.00px;font-size:17px;line-height:23px;color:#000;letter-spacing:0.6px;">9</div>
<div class="t" style="left:238.52px;top:366.00px;font-size:17px;line-height:23px;color:#000;letter-spacing:0.6px;">8.81</div>
<div class="t" style="left:418.95px;top:366.00px;font-size:17px;line-height:23px;color:#000;letter-spacing:0.6px;">9</div>
<div class="t" style="left:512.78px;top:366.00px;font-size:17px;line-height:23px;color:#000;letter-spacing:0.6px;">7.11</div>
<div class="t" style="left:691.95px;top:366.00px;font-size:17px;line-height:23px;color:#000;letter-spacing:0.6px;">9</div>
<div class="t" style="left:137.15px;top:391.00px;font-size:17px;line-height:23px;color:#000;letter-spacing:0.6px;">11</div>
<div class="t" style="left:238.52px;top:391.00px;font-size:17px;line-height:23px;color:#000;letter-spacing:0.6px;">8.33</div>
<div class="t" style="left:410.15px;top:391.00px;font-size:17px;line-height:23px;color:#000;letter-spacing:0.6px;">11</div>
<div class="t" style="left:511.52px;top:391.00px;font-size:17px;line-height:23px;color:#000;letter-spacing:0.6px;">7.81</div>
<div class="t" style="left:683.15px;top:391.00px;font-size:17px;line-height:23px;color:#000;letter-spacing:0.6px;">11</div>
<div class="t" style="left:135.90px;top:416.00px;font-size:17px;line-height:23px;color:#000;letter-spacing:0.6px;">14</div>
<div class="t" style="left:238.52px;top:416.00px;font-size:17px;line-height:23px;color:#000;letter-spacing:0.6px;">9.96</div>
<div class="t" style="left:408.90px;top:416.00px;font-size:17px;line-height:23px;color:#000;letter-spacing:0.6px;">14</div>
<div class="t" style="left:511.52px;top:416.00px;font-size:17px;line-height:23px;color:#000;letter-spacing:0.6px;">8.84</div>
<div class="t" style="left:681.90px;top:416.00px;font-size:17px;line-height:23px;color:#000;letter-spacing:0.6px;">14</div>
<div class="t" style="left:145.95px;top:441.00px;font-size:17px;line-height:23px;color:#000;letter-spacing:0.6px;">6</div>
<div class="t" style="left:238.52px;top:441.00px;font-size:17px;line-height:23px;color:#000;letter-spacing:0.6px;">7.24</div>
<div class="t" style="left:418.95px;top:441.00px;font-size:17px;line-height:23px;color:#000;letter-spacing:0.6px;">6</div>
<div class="t" style="left:511.52px;top:441.00px;font-size:17px;line-height:23px;color:#000;letter-spacing:0.6px;">6.08</div>
<div class="t" style="left:691.95px;top:441.00px;font-size:17px;line-height:23px;color:#000;letter-spacing:0.6px;">6</div>
<div class="t" style="left:145.95px;top:466.00px;font-size:17px;line-height:23px;color:#000;letter-spacing:0.6px;">4</div>
<div class="t" style="left:238.52px;top:466.00px;font-size:17px;line-height:23px;color:#000;letter-spacing:0.6px;">4.26</div>
<div class="t" style="left:418.95px;top:466.00px;font-size:17px;line-height:23px;color:#000;letter-spacing:0.6px;">4</div>
<div class="t" style="left:511.52px;top:466.00px;font-size:17px;line-height:23px;color:#000;letter-spacing:0.6px;">5.39</div>
<div class="t" style="left:691.95px;top:466.00px;font-size:17px;line-height:23px;color:#000;letter-spacing:0.6px;">4</div>
<div class="t" style="left:135.90px;top:491.00px;font-size:17px;line-height:23px;color:#000;letter-spacing:0.6px;">12</div>
<div class="t" style="left:228.47px;top:491.00px;font-size:17px;line-height:23px;color:#000;letter-spacing:0.6px;">10.84</div>
<div class="t" style="left:408.90px;top:491.00px;font-size:17px;line-height:23px;color:#000;letter-spacing:0.6px;">12</div>
<div class="t" style="left:511.52px;top:491.00px;font-size:17px;line-height:23px;color:#000;letter-spacing:0.6px;">8.15</div>
<div class="t" style="left:681.90px;top:491.00px;font-size:17px;line-height:23px;color:#000;letter-spacing:0.6px;">12</div>
<div class="t" style="left:145.95px;top:516.00px;font-size:17px;line-height:23px;color:#000;letter-spacing:0.6px;">7</div>
<div class="t" style="left:238.52px;top:516.00px;font-size:17px;line-height:23px;color:#000;letter-spacing:0.6px;">4.82</div>
<div class="t" style="left:418.95px;top:516.00px;font-size:17px;line-height:23px;color:#000;letter-spacing:0.6px;">7</div>
<div class="t" style="left:511.52px;top:516.00px;font-size:17px;line-height:23px;color:#000;letter-spacing:0.6px;">6.42</div>
<div class="t" style="left:691.95px;top:516.00px;font-size:17px;line-height:23px;color:#000;letter-spacing:0.6px;">7</div>
<div class="t" style="left:145.95px;top:541.00px;font-size:17px;line-height:23px;color:#000;letter-spacing:0.6px;">5</div>
<div class="t" style="left:238.52px;top:541.00px;font-size:17px;line-height:23px;color:#000;letter-spacing:0.6px;">5.68</div>
<div class="t" style="left:418.95px;top:541.00px;font-size:17px;line-height:23px;color:#000;letter-spacing:0.6px;">5</div>
<div class="t" style="left:511.52px;top:541.00px;font-size:17px;line-height:23px;color:#000;letter-spacing:0.6px;">5.73</div>
<div class="t" style="left:691.95px;top:541.00px;font-size:17px;line-height:23px;color:#000;letter-spacing:0.6px;">5</div>
<div class="b" style="left:779px;top:246px;width:472px;height:358px;box-shadow:0 3px 9px 1px rgba(0,0,0,.24),0 1px 3px rgba(0,0,0,.15);"></div>
<div class="b" style="left:778px;top:242px;width:472px;height:32px;background:#fff;border:1px solid #8c8c8c;border-bottom:none;"></div>
<div class="b" style="left:778px;top:273px;width:473px;height:331px;background:#f0f0f0;border-left:1px solid #8c8c8c;"></div>
<div class="t" style="left:787.30px;top:249.00px;font-size:12px;line-height:18px;color:#868686;letter-spacing:-0.190px;">Descriptive Statistics</div>
<div class="t" style="left:1177.39px;top:248.00px;font-size:13px;line-height:19px;color:#7a7a7a;">?</div>
<svg class="b" style="left:1220px;top:251px" width="12" height="12" viewBox="0 0 12 12" fill="none" stroke="#7d7d7d" stroke-width="1"><path d="M1 1l10 10M11 1L1 11"/></svg>
<div class="b" style="left:786px;top:283px;width:347px;height:105px;border:1px solid #dfdfdf;"></div>
<div class="b" style="left:791.9px;top:282px;width:26.5px;height:4px;background:#f0f0f0;"></div>
<div class="t" style="left:793.90px;top:276.00px;font-size:10.5px;line-height:16px;color:#000;letter-spacing:-0.213px;">Input</div>
<div class="b" style="left:786px;top:403px;width:347px;height:174px;border:1px solid #dfdfdf;"></div>
<div class="b" style="left:791.4px;top:402px;width:74.30000000000007px;height:4px;background:#f0f0f0;"></div>
<div class="t" style="left:793.40px;top:396.00px;font-size:11px;line-height:16px;color:#000;letter-spacing:-0.096px;">Output options</div>
<div class="t" style="left:795.60px;top:296.00px;font-size:10.25px;line-height:15px;color:#000;letter-spacing:-0.091px;"><u>I</u>nput Range:</div>
<div class="b" style="left:977px;top:292px;width:144px;height:20px;background:#fff;border:1px solid #c6c6c6;"></div>
<div class="b" style="left:1102px;top:292px;width:19px;height:20px;background:#e6e6e6;border:1px solid #b4b4b4;box-shadow:inset 0 0 0 1px #f2f2f2;"></div>
<svg class="b" style="left:1107px;top:296px" width="9" height="12" viewBox="0 0 9 12"><path d="M4.500 0l3.600 4.200H5.400v4.100H3.600V4.200H.9zM1 9.700h7v1.400H1z" fill="#111"/></svg>
<div class="t" style="left:981.90px;top:295.00px;font-size:10.0px;line-height:15px;color:#222;letter-spacing:-0.167px;">$A$2:$H$13</div>
<div class="t" style="left:795.30px;top:322.00px;font-size:10.5px;line-height:16px;color:#000;letter-spacing:-0.145px;">Grouped By:</div>
<div class="b" style="left:977.0px;top:321.0px;width:13px;height:13px;border:1px solid #333;border-radius:50%;background:#fff;"></div>
<div class="b" style="left:979.5px;top:323.5px;width:8px;height:8px;border-radius:50%;background:#222;"></div>
<div class="t" style="left:994.60px;top:321.00px;font-size:10.25px;line-height:15px;color:#000;letter-spacing:-0.174px;"><u>C</u>olumns</div>
<div class="b" style="left:977.0px;top:340.0px;width:13px;height:13px;border:1px solid #333;border-radius:50%;background:#fff;"></div>
<div class="t" style="left:994.60px;top:340.00px;font-size:10.0px;line-height:15px;color:#000;letter-spacing:-0.270px;"><u>R</u>ows</div>
<div class="b" style="left:795px;top:360px;width:13px;height:13px;border:1px solid #333;background:#fff;"></div>
<svg class="b" style="left:795px;top:360px" width="13" height="13" viewBox="0 0 13 13" fill="none" stroke="#222" stroke-width="1.1"><path d="M2.800 6.500l2.700 2.800 5-5.500"/></svg>
<div class="t" style="left:811.60px;top:359.00px;font-size:11px;line-height:16px;color:#000;letter-spacing:-0.162px;"><u>L</u>abels in first row</div>
<div class="b" style="left:1147px;top:283px;width:79px;height:22px;background:#e1e1e1;border:2px solid #0078d7;"></div>
<div class="t" style="left:1179.30px;top:287.00px;font-size:10.0px;line-height:15px;color:#000;letter-spacing:-0.050px;">OK</div>
<div class="b" style="left:1147px;top:308px;width:79px;height:23px;background:#e1e1e1;border:1px solid #adadad;"></div>
<div class="t" style="left:1171.50px;top:313.00px;font-size:10.0px;line-height:15px;color:#000;letter-spacing:-0.306px;">Cancel</div>
<div class="b" style="left:1147px;top:338px;width:79px;height:23px;background:#e1e1e1;border:1px solid #adadad;"></div>
<div class="t" style="left:1176.10px;top:343.00px;font-size:10.25px;line-height:15px;color:#000;letter-spacing:-0.061px;"><u>H</u>elp</div>
<div class="b" style="left:795.0px;top:420.5px;width:13px;height:13px;border:1px solid #333;border-radius:50%;background:#fff;"></div>
<div class="b" style="left:797.5px;top:423px;width:8px;height:8px;border-radius:50%;background:#222;"></div>
<div class="t" style="left:811.60px;top:419.00px;font-size:10.75px;line-height:16px;color:#000;letter-spacing:-0.210px;"><u>O</u>utput Range:</div>
<div class="b" style="left:977px;top:414px;width:144px;height:21px;background:#fff;border:1px solid #c6c6c6;"></div>
<div class="b" style="left:1102px;top:414px;width:19px;height:21px;background:#e6e6e6;border:1px solid #b4b4b4;box-shadow:inset 0 0 0 1px #f2f2f2;"></div>
<svg class="b" style="left:1107px;top:418px" width="9" height="12" viewBox="0 0 9 12"><path d="M4.500 0l3.600 4.200H5.400v4.100H3.600V4.200H.9zM1 9.700h7v1.400H1z" fill="#111"/></svg>
<div class="t" style="left:981.60px;top:417.00px;font-size:10.0px;line-height:15px;color:#222;letter-spacing:-0.180px;">$A$16</div>
<div class="b" style="left:795.0px;top:442.0px;width:13px;height:13px;border:1px solid #333;border-radius:50%;background:#fff;"></div>
<div class="t" style="left:811.60px;top:441.00px;font-size:10.5px;line-height:16px;color:#000;letter-spacing:-0.114px;">New Worksheet <u>P</u>ly:</div>
<div class="b" style="left:977px;top:438px;width:144px;height:21px;background:#f0f0f0;border:1px solid #cdcdcd;box-shadow:inset 0 0 0 2px #fff;"></div>
<div class="b" style="left:795.0px;top:464.0px;width:13px;height:13px;border:1px solid #333;border-radius:50%;background:#fff;"></div>
<div class="t" style="left:811.60px;top:463.00px;font-size:11px;line-height:16px;color:#000;letter-spacing:-0.100px;">New <u>W</u>orkbook</div>
<div class="b" style="left:795px;top:490px;width:13px;height:13px;border:1px solid #333;background:#fff;"></div>
<svg class="b" style="left:795px;top:490px" width="13" height="13" viewBox="0 0 13 13" fill="none" stroke="#222" stroke-width="1.1"><path d="M2.800 6.500l2.700 2.800 5-5.500"/></svg>
<div class="t" style="left:811.60px;top:489.00px;font-size:10.5px;line-height:16px;color:#000;letter-spacing:-0.176px;"><u>S</u>ummary statistics</div>
<div class="b" style="left:795px;top:512px;width:13px;height:13px;border:1px solid #333;background:#fff;"></div>
<div class="t" style="left:811.60px;top:511.00px;font-size:10.75px;line-height:16px;color:#000;letter-spacing:-0.155px;">Co<u>n</u>fidence Level for Mean:</div>
<div class="b" style="left:1013px;top:508px;width:49px;height:20px;background:#f0f0f0;border:1px solid #cdcdcd;box-shadow:inset 0 0 0 2px #fff;"></div>
<div class="t" style="left:1017.30px;top:510.00px;font-size:10px;line-height:15px;color:#9a9a9a;letter-spacing:0.580px;">95</div>
<div class="t" style="left:1067.80px;top:510.00px;font-size:10px;line-height:15px;color:#000;">%</div>
<div class="b" style="left:795px;top:534px;width:13px;height:13px;border:1px solid #333;background:#fff;"></div>
<div class="t" style="left:812.00px;top:533.00px;font-size:10.5px;line-height:16px;color:#000;letter-spacing:-0.147px;">Kth L<u>a</u>rgest:</div>
<div class="b" style="left:973px;top:529px;width:91px;height:22px;background:#f0f0f0;border:1px solid #cdcdcd;box-shadow:inset 0 0 0 2px #fff;"></div>
<div class="t" style="left:978.40px;top:532.00px;font-size:10px;line-height:15px;color:#9a9a9a;">1</div>
<div class="b" style="left:795px;top:556px;width:13px;height:13px;border:1px solid #333;background:#fff;"></div>
<div class="t" style="left:812.00px;top:556.00px;font-size:10.25px;line-height:15px;color:#000;letter-spacing:-0.115px;">Kth S<u>m</u>allest:</div>
<div class="b" style="left:973px;top:550px;width:91px;height:21px;background:#f0f0f0;border:1px solid #cdcdcd;box-shadow:inset 0 0 0 2px #fff;"></div>
<div class="t" style="left:978.40px;top:553.00px;font-size:10px;line-height:15px;color:#9a9a9a;">1</div>
</body></html>
